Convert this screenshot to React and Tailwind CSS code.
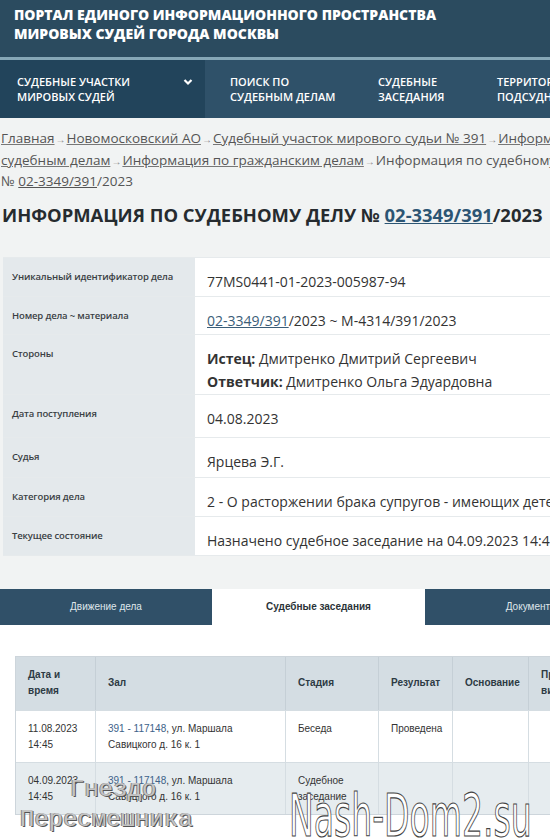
import React from "react";

const crumbs = [
  { t: "Главная", link: true },
  { t: "Новомосковский АО", link: true },
  { t: "Судебный участок мирового судьи № 391", link: true },
  { t: "Информация по судебным делам", link: true },
  { t: "Информация по гражданским делам", link: true },
];

const Arrow = () => <span className="text-[#888] text-[10px] mx-[1px]">→</span>;

const InfoRow = ({ label, children, h }) => (
  <div className="flex border-b border-[#e6eaec]">
    <div className={`w-[192px] shrink-0 bg-[#e4e9ec] px-[9px] pt-[12px] text-[9.5px] tracking-[-0.15px] font-semibold text-[#3a3f44] whitespace-nowrap ${h}`}>
      {label}
    </div>
    <div className="flex-1 bg-white pl-[12px] pt-[12px] text-[14px] leading-[23px] text-[#333] whitespace-nowrap">
      {children}
    </div>
  </div>
);

const cols = ["w-[80px]", "w-[190px]", "w-[93px]", "w-[74px]", "w-[76px]", "w-[60px]"];

export default function App() {
  return (
    <div className="w-[550px] h-[840px] overflow-hidden relative bg-[#f1f3f3] font-['Open_Sans',sans-serif]">
      {/* header */}
      <div className="bg-[#2b4b5f] h-[57px] px-[14px] pt-[5px]">
        <div className="text-white font-extrabold uppercase text-[14px] leading-[19px] whitespace-nowrap">
          Портал единого информационного пространства
          <br />
          мировых судей города Москвы
        </div>
      </div>
      <div className="h-[3px] bg-[#86a7b6]" />
      <div className="flex h-[58px] bg-[#2f5169] text-white text-[11px] font-semibold uppercase leading-[15px] whitespace-nowrap">
        <div className="w-[205px] shrink-0 bg-[#22445b] flex items-center pl-[17px] pr-[12px] justify-between">
          <span>Судебные участки<br />мировых судей</span>
          <svg width="10" height="8" viewBox="0 0 10 8" className="mb-[14px]">
            <path d="M1.5 2 L5 5.5 L8.5 2" stroke="white" strokeWidth="2.2" fill="none" />
          </svg>
        </div>
        <div className="flex items-center pl-[25px] w-[173px] shrink-0">
          <span>Поиск по<br />судебным делам</span>
        </div>
        <div className="flex items-center w-[119px] shrink-0">
          <span>Судебные<br />заседания</span>
        </div>
        <div className="flex items-center">
          <span>Территориальная<br />подсудность</span>
        </div>
      </div>

      {/* breadcrumbs */}
      <div className="w-[640px] pl-[1px] pt-[10px] text-[13.5px] leading-[20.5px] text-[#555]">
        {crumbs.map((c, i) => (
          <React.Fragment key={i}>
            <a className="underline decoration-[#777] text-[#555]">{c.t}</a>
            <Arrow />
          </React.Fragment>
        ))}
        <span>Информация по судебному делу</span>
        <br />
        <span>№ <a className="underline">02-3349/391</a>/2023</span>
      </div>

      <h1 className="pl-[2px] mt-[11px] text-[18.4px] font-bold uppercase text-[#262b2f] whitespace-nowrap leading-[24px]">
        Информация по судебному делу №{" "}
        <a className="underline text-[#2c5573] decoration-[#2c5573]">02-3349/391</a>/2023
      </h1>

      {/* details */}
      <div className="ml-[3px] mt-[30px] w-[620px] border-t border-[#e6eaec]">
        <InfoRow label="Уникальный идентификатор дела" h="h-[38px]">77MS0441-01-2023-005987-94</InfoRow>
        <InfoRow label="Номер дела ~ материала" h="h-[37px]">
          <a className="underline text-[#3a5d78]">02-3349/391</a>/2023 ~ М-4314/391/2023
        </InfoRow>
        <InfoRow label="Стороны" h="h-[59px]">
          <b className="font-bold">Истец:</b> Дмитренко Дмитрий Сергеевич
          <br />
          <b className="font-bold">Ответчик:</b> Дмитренко Ольга Эдуардовна
        </InfoRow>
        <InfoRow label="Дата поступления" h="h-[42px]">04.08.2023</InfoRow>
        <InfoRow label="Судья" h="h-[39px]">Ярцева Э.Г.</InfoRow>
        <InfoRow label="Категория дела" h="h-[38px]">2 - О расторжении брака супругов - имеющих детей</InfoRow>
        <InfoRow label="Текущее состояние" h="h-[38px]">Назначено судебное заседание на 04.09.2023 14:45</InfoRow>
      </div>

      {/* tabs */}
      <div className="mt-[33px] flex h-[36px] w-[640px] text-[10px] font-['Liberation_Sans',sans-serif]">
        <div className="w-[212px] bg-[#305068] text-[#dfe6eb] flex items-center justify-center">Движение дела</div>
        <div className="w-[213px] bg-white text-[#2b3338] font-bold flex items-center justify-center">Судебные заседания</div>
        <div className="w-[213px] bg-[#305068] text-[#dfe6eb] flex items-center justify-center">Документы</div>
      </div>

      <div className="bg-white h-[220px] pt-[31px] pl-[15px] font-['Liberation_Sans',sans-serif] text-[10px] text-[#333]">
        <div className="w-[600px] border border-[#cdd5db]">
          <div className="flex h-[53px] bg-[#d4dde3] font-bold text-[#2d3a44] leading-[16px]">
            {["Дата и\nвремя", "Зал", "Стадия", "Результат", "Основание", "Примечание\nвид"].map((h, i) => (
              <div key={i} className={`${cols[i]} shrink-0 flex items-center px-[12px] whitespace-pre border-r border-[#c5cfd6]`}>
                {h}
              </div>
            ))}
          </div>
          {[
            { bg: "bg-white", d: "11.08.2023\n14:45", st: "Беседа", r: "Проведена" },
            { bg: "bg-[#e6ecef]", d: "04.09.2023\n14:45", st: "Судебное\nзаседание", r: "" },
          ].map((row, k) => (
            <div key={k} className={`flex h-[52px] ${row.bg} leading-[16px] border-t border-[#d5dde2]`}>
              <div className={`${cols[0]} shrink-0 px-[12px] pt-[10px] whitespace-pre border-r border-[#d5dde2]`}>{row.d}</div>
              <div className={`${cols[1]} shrink-0 px-[12px] pt-[10px] border-r border-[#d5dde2]`}>
                <span className="text-[#3d6289]">391 - 117148</span>, ул. Маршала
                <br />
                Савицкого д. 16 к. 1
              </div>
              <div className={`${cols[2]} shrink-0 px-[12px] pt-[10px] whitespace-pre border-r border-[#d5dde2]`}>{row.st}</div>
              <div className={`${cols[3]} shrink-0 px-[12px] pt-[10px] border-r border-[#d5dde2]`}>{row.r}</div>
              <div className={`${cols[4]} shrink-0 border-r border-[#d5dde2]`} />
              <div className={`${cols[5]} shrink-0`} />
            </div>
          ))}
        </div>
      </div>

      {/* watermarks */}
      <div className="absolute left-[20px] top-[775px] font-['Liberation_Mono',monospace] text-[24px] leading-[30px] text-[#c4c4c4] [text-shadow:1px_1px_0_#555,-1px_0_0_#888]">
        <div className="pl-[50px]">Гнездо</div>
        <div>Пересмешника</div>
      </div>
      <div className="absolute left-[289px] top-[784px] font-['DejaVu_Sans',sans-serif] text-[58px] leading-[64px] text-white [-webkit-text-stroke:1.2px_#444] origin-left scale-x-[0.57] whitespace-nowrap">
        Nash-Dom2.su
      </div>
    </div>
  );
}
